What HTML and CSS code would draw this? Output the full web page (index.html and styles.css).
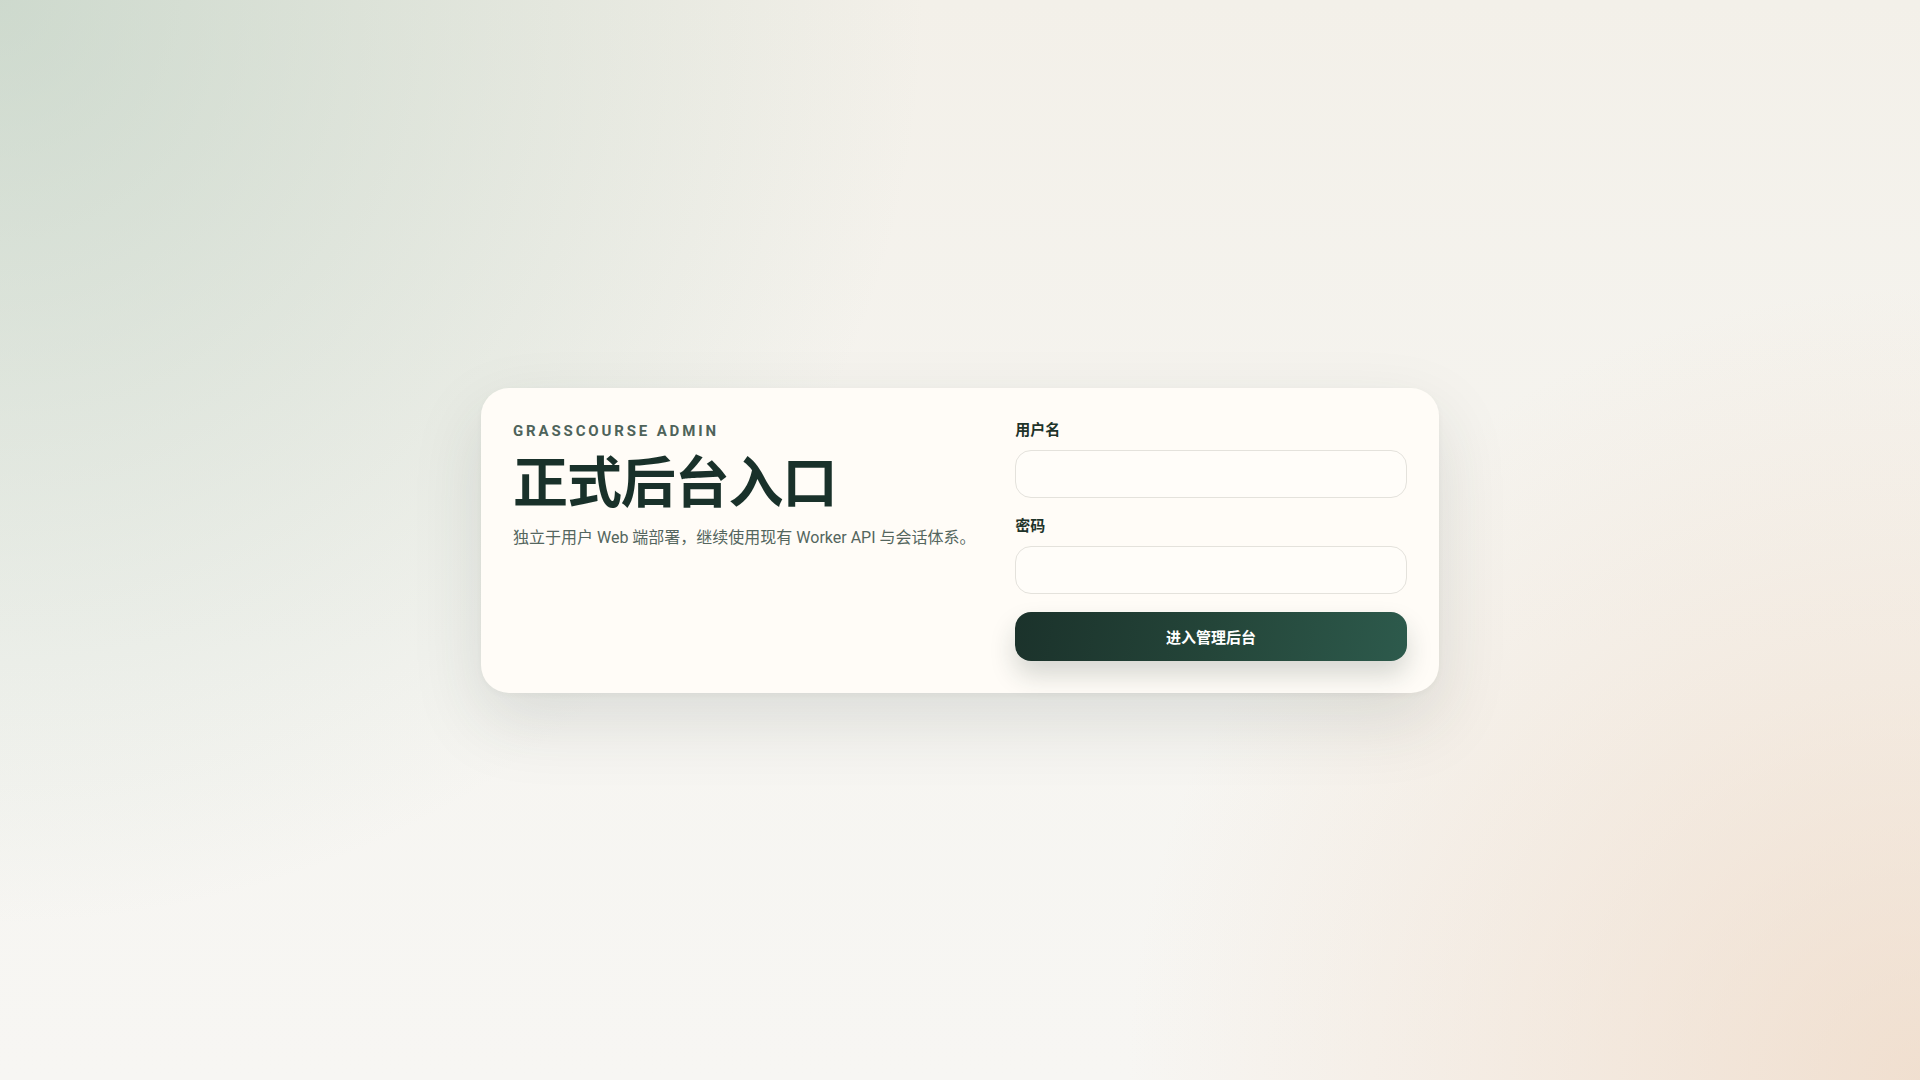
FILE: index.html
```html
<!DOCTYPE html>
<html lang="zh-CN">
<head>
<meta charset="utf-8">
<title>GrassCourse Admin</title>
<link rel="stylesheet" href="styles.css">
</head>
<body>
<main class="shell">
  <section class="card">
    <div class="intro">
      <p class="eyebrow">GrassCourse Admin</p>
      <h1 class="title">正式后台入口</h1>
      <p class="lead">独立于用户 Web 端部署，继续使用现有 Worker API 与会话体系。</p>
    </div>
    <form class="form">
      <label class="field">
        <span class="label">用户名</span>
        <input class="input" type="text" autocomplete="username">
      </label>
      <label class="field">
        <span class="label">密码</span>
        <input class="input" type="password" autocomplete="current-password">
      </label>
      <button class="submit" type="button">进入管理后台</button>
    </form>
  </section>
</main>
</body>
</html>
```

FILE: styles.css
```css
* { box-sizing: border-box; }
html, body { height: 100%; }
body {
  margin: 0;
  font-family: Roboto, "Noto Sans CJK SC", sans-serif;
  color: #1b3129;
  background:
    radial-gradient(circle at 0% 0%, rgba(160, 190, 172, 0.45), rgba(160, 190, 172, 0) 42%),
    radial-gradient(circle at 100% 100%, rgba(236, 208, 184, 0.6), rgba(236, 208, 184, 0) 36%),
    linear-gradient(180deg, #f3f0e9 0%, #f6f5f1 60%, #f7f6f3 100%);
}
.shell {
  min-height: 100vh;
  display: flex;
  align-items: center;
  justify-content: center;
  padding: 24px;
}
.card {
  width: 958px;
  background: #fffcf7;
  border-radius: 28px;
  padding: 32px;
  display: grid;
  grid-template-columns: 1.2fr 1fr;
  gap: 32px;
  box-shadow: 0 28px 70px rgba(40, 52, 44, 0.13), 0 2px 6px rgba(40, 52, 44, 0.04);
}
.intro { display: flex; flex-direction: column; }
.eyebrow {
  margin: 0;
  font-size: 15px;
  line-height: 22px;
  font-weight: 700;
  letter-spacing: 0.19em;
  text-transform: uppercase;
  color: #4e635a;
}
.title {
  margin: 11px 0 0;
  font-size: 55px;
  line-height: 1.1;
  font-weight: 700;
  letter-spacing: -0.02em;
  color: #19312a;
}
.lead {
  margin: 12px 0 0;
  font-size: 16px;
  line-height: 1.6;
  color: #54665e;
}
.form { display: flex; flex-direction: column; gap: 18px; }
.field { display: flex; flex-direction: column; gap: 9px; }
.label {
  font-size: 15px;
  line-height: 21px;
  font-weight: 700;
  color: #1e3329;
}
.input {
  height: 48px;
  border: 1px solid #e4e2dc;
  border-radius: 16px;
  background: #fffdf9;
  padding: 0 16px;
  font: inherit;
  font-size: 15px;
  color: #1b3129;
  outline: none;
}
.submit {
  height: 49px;
  border: 0;
  border-radius: 16px;
  background: linear-gradient(100deg, #1b322b 0%, #244539 50%, #2d5a4c 100%);
  color: #ffffff;
  font-family: Roboto, "Noto Sans CJK SC", sans-serif;
  font-size: 15px;
  font-weight: 700;
  box-shadow: 0 14px 26px rgba(27, 50, 43, 0.18);
  cursor: pointer;
}
```
